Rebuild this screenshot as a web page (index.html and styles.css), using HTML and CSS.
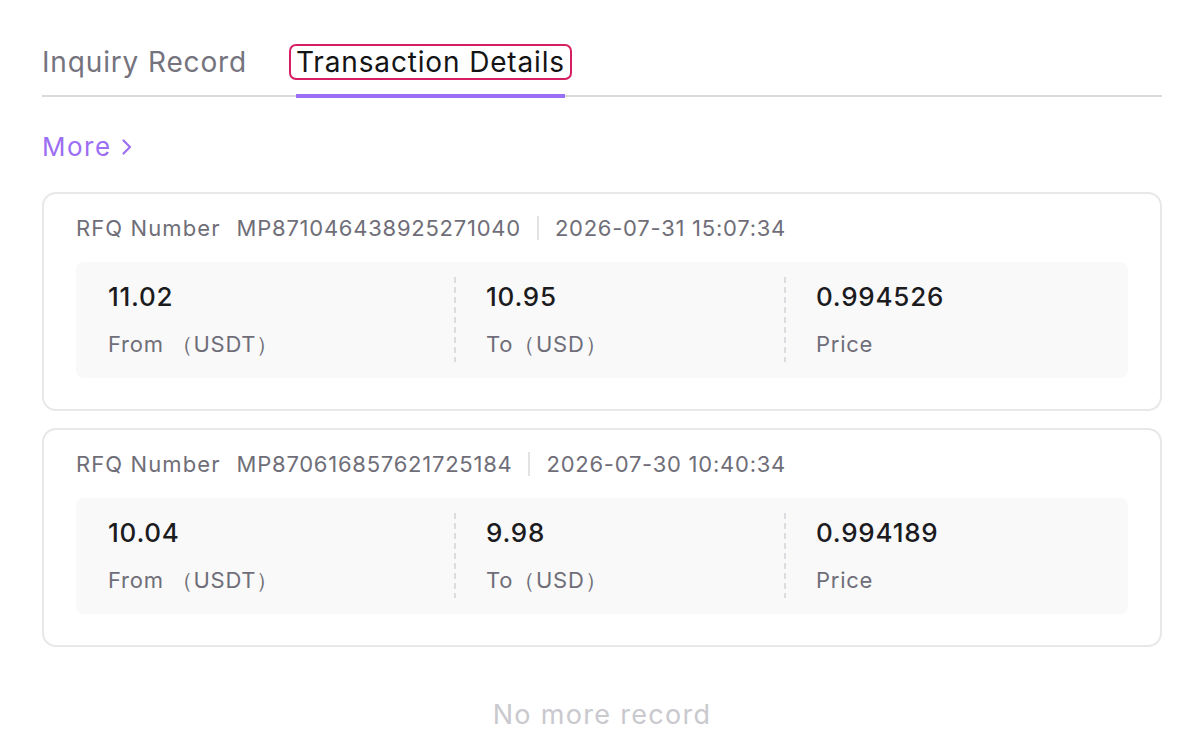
FILE: index.html
```html
<!DOCTYPE html>
<html lang="en">
<head>
<meta charset="utf-8">
<title>Transaction Details</title>
<link rel="stylesheet" href="styles.css">
</head>
<body>
<div class="page">
  <nav class="tabs">
    <div class="tab"><span class="tab-label">Inquiry Record</span></div>
    <div class="tab tab-active"><span class="tab-label">Transaction Details</span></div>
  </nav>

  <a class="more" href="#">More
    <svg class="more-icon" viewBox="0 0 12 20" width="12" height="20" aria-hidden="true">
      <path d="M2.5 3.5 L9 10 L2.5 16.5" fill="none" stroke="currentColor" stroke-width="2.2" stroke-linecap="round" stroke-linejoin="round"/>
    </svg>
  </a>

  <section class="card">
    <div class="card-head">
      <span class="head-label">RFQ Number</span>
      <span class="head-id">MP871046438925271040</span>
      <span class="head-sep"></span>
      <span class="head-time">2026-07-31 15:07:34</span>
    </div>
    <div class="stats">
      <div class="stat">
        <div class="stat-value">11.02</div>
        <div class="stat-label">From （USDT）</div>
      </div>
      <div class="stat">
        <div class="stat-value">10.95</div>
        <div class="stat-label">To（USD）</div>
      </div>
      <div class="stat">
        <div class="stat-value">0.994526</div>
        <div class="stat-label">Price</div>
      </div>
    </div>
  </section>

  <section class="card">
    <div class="card-head">
      <span class="head-label">RFQ Number</span>
      <span class="head-id">MP870616857621725184</span>
      <span class="head-sep"></span>
      <span class="head-time">2026-07-30 10:40:34</span>
    </div>
    <div class="stats">
      <div class="stat">
        <div class="stat-value">10.04</div>
        <div class="stat-label">From （USDT）</div>
      </div>
      <div class="stat">
        <div class="stat-value">9.98</div>
        <div class="stat-label">To（USD）</div>
      </div>
      <div class="stat">
        <div class="stat-value">0.994189</div>
        <div class="stat-label">Price</div>
      </div>
    </div>
  </section>

  <p class="end-note">No more record</p>
</div>
</body>
</html>
```

FILE: styles.css
```css
* {
  box-sizing: border-box;
}

html, body {
  margin: 0;
  background: #ffffff;
}

body {
  font-family: Inter, "Noto Sans", "Liberation Sans", sans-serif;
  color: #1c1c1f;
}

.page {
  width: 1120px;
  margin-left: 42px;
}

/* tab bar */
.tabs {
  display: flex;
  gap: 49px;
  margin-top: 46px;
  border-bottom: 2px solid #dadadd;
}

.tab {
  position: relative;
  padding-bottom: 17px;
}

.tab-label {
  display: block;
  font-size: 28px;
  line-height: 32px;
  letter-spacing: 0.85px;
  color: #74737e;
}

.tab-active .tab-label {
  color: #141416;
  padding: 0 5px;
  margin: 0 -5px;
  outline: 2px solid #d61f63;
  border-radius: 5px;
}

.tab-active::after {
  content: "";
  position: absolute;
  left: 0;
  right: 0;
  bottom: -3px;
  height: 4px;
  background: #9b6ef3;
}

/* more link */
.more {
  display: inline-flex;
  align-items: center;
  gap: 9px;
  margin-top: 32px;
  font-size: 26px;
  line-height: 36px;
  letter-spacing: 1.5px;
  color: #9b6ef3;
  text-decoration: none;
}

.more-icon {
  display: block;
}

/* record cards */
.card {
  margin-top: 27px;
  border: 2px solid #e8e8ea;
  border-radius: 14px;
  padding: 19px 32px 31px;
}

.card + .card {
  margin-top: 17px;
}

.card-head {
  display: flex;
  align-items: center;
  font-size: 22px;
  line-height: 30px;
  letter-spacing: 0.75px;
  color: #6f6e78;
}

.head-label {
  letter-spacing: 1.1px;
}

.head-id {
  margin-left: 16px;
}

.head-sep {
  width: 2px;
  height: 24px;
  margin: 0 16px;
  background: #e3e3e6;
}

.stats {
  display: grid;
  grid-template-columns: 378px 330px 1fr;
  margin-top: 19px;
  padding: 15px 0 16px;
  background: #f9f9fa;
  border-radius: 8px;
}

.stat {
  padding-left: 32px;
}

.stat + .stat {
  background-image: linear-gradient(#dcdce1 60%, transparent 60%);
  background-size: 2px 10px;
  background-repeat: repeat-y;
  background-position: left top;
}

.stat-value {
  margin-top: 2px;
  font-size: 26px;
  font-weight: 500;
  line-height: 36px;
  letter-spacing: 0.75px;
  color: #1c1c1f;
}

.stat-label {
  margin-top: 14px;
  margin-bottom: 3px;
  font-size: 22px;
  line-height: 30px;
  letter-spacing: 0.75px;
  color: #6f6e78;
}

.end-note {
  margin: 50px 0 0;
  text-align: center;
  font-size: 27px;
  line-height: 36px;
  letter-spacing: 1.3px;
  color: #c9c9ce;
}
```
